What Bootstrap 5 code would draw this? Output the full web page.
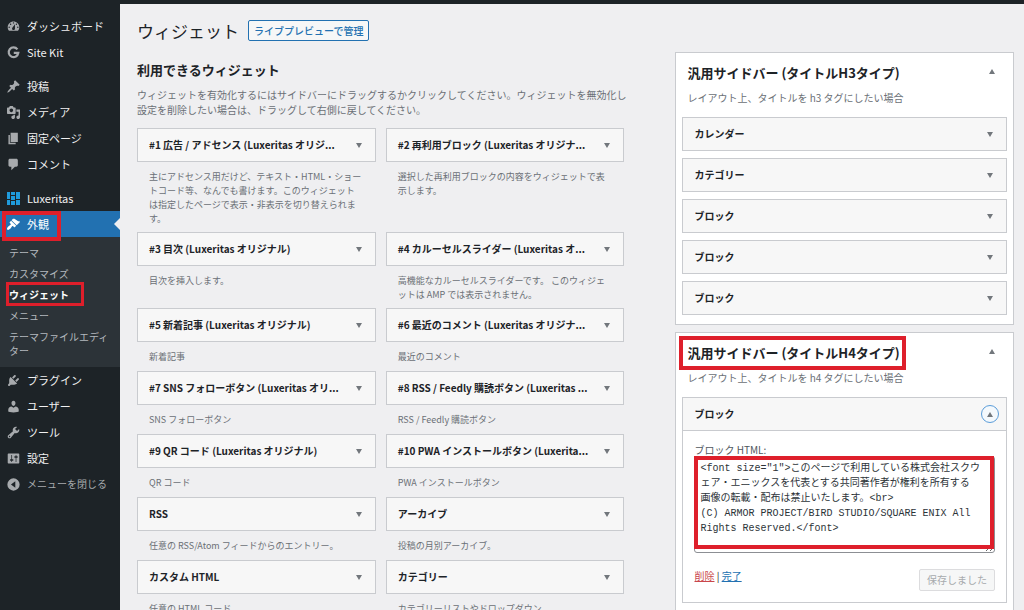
<!DOCTYPE html>
<html lang="ja">
<head>
<meta charset="utf-8">
<meta name="viewport" content="width=device-width, initial-scale=1">
<title>ウィジェット</title>
<link href="https://cdn.jsdelivr.net/npm/bootstrap@5.3.0/dist/css/bootstrap.min.css" rel="stylesheet">
<style>
  :root { --ink: #1d2327; --line: #c9cbcf; --muted: #6b7076; --red: #de1f2b; }
  body { font-family: "Noto Sans CJK JP", "Noto Sans", sans-serif; font-size: 10px; line-height: 14px; color: var(--ink); background: #efeff1; }
  .topbar { height: 4px; background: var(--ink); }
  .shell { height: calc(100vh - 4px); }

  /* admin menu */
  .admin-menu { width: 120px; background: var(--ink); padding-top: 9px; }
  .admin-menu .menu-link { height: 26px; padding-left: 7px; gap: 7px; color: #f0f0f1; font-size: 11px; text-decoration: none; white-space: nowrap; }
  .admin-menu .menu-link svg { width: 13px; height: 13px; fill: #a7aaad; flex: none; }
  .admin-menu .menu-gap { margin-top: 8px; }
  .admin-menu .menu-current { background: #2271b1; color: #fff; }
  .admin-menu .menu-current svg { fill: #fff; }
  .menu-current::after { content: ""; position: absolute; right: 0; top: 7px; border: 6px solid transparent; border-right-color: #efeff1; border-left: 0; }
  .admin-menu .menu-collapse { font-size: 10px; color: #a7aaad; background: none; border: 0; }
  .submenu { background: #2c3338; padding: 5px 0 6px; }
  .submenu a { display: block; padding: 4px 8px 3px 9px; color: #b4b9be; text-decoration: none; }
  .submenu .active { color: #fff; font-weight: 700; }

  /* highlight frames */
  .frame { position: absolute; border: 4px solid var(--red); pointer-events: none; z-index: 2; }
  .frame-menu { left: 2px; top: 0; width: 59px; height: 30px; }
  .frame-sub { left: 6px; top: -2px; width: 78px; height: 24px; border-width: 3px; }
  .frame-title { inset: -8px auto auto -8px; width: 227px; height: 34px; }
  .frame-code { inset: 0 1px 4px 0; }

  /* content */
  .page-main { padding: 0 10px 0 17px; min-width: 0; }
  .page-head { height: 48px; padding-top: 16px; gap: 9px; }
  .page-head h1 { font-size: 17px; line-height: 21px; font-weight: 400; }
  .btn-preview { font-size: 10px; line-height: 19px; padding: 0 5px; color: #2271b1; border: 1px solid #2271b1; border-radius: 2px; background: #f6f7f7; font-weight: 500; }
  .columns { display: grid; grid-template-columns: minmax(0, 144fr) minmax(0, 100fr); column-gap: 51px; align-items: start; }
  .available { padding-top: 9px; }
  .available h2 { font-size: 13px; line-height: 18px; font-weight: 700; }
  .lead-text { line-height: 15px; color: var(--muted); margin: 8px 0 11px; white-space: nowrap; }
  .widget-grid { display: grid; grid-template-columns: repeat(2, minmax(0, 1fr)); column-gap: 10px; }
  .wbox { height: 34px; padding: 0 12px 0 11px; background: #f7f7f7; border: 1px solid var(--line); }
  .wbox h3, .panel-head h2 { white-space: nowrap; }
  .wbox h3 { font-size: 10px; line-height: 14px; font-weight: 700; }
  .wdesc { font-size: 9px; min-height: 15px; margin: 8px 11px 6px 12px; color: var(--muted); white-space: nowrap; }
  .toggle { border: 0; background: none; padding: 0; width: 8px; height: 14px; display: flex; align-items: center; justify-content: center; flex: none; }
  .toggle::before { content: ""; border: 3px solid transparent; border-top: 5px solid #72777c; border-bottom: 0; }
  .toggle.up::before { border-top: 0; border-bottom: 5px solid #72777c; }
  .toggle.ring { width: 18px; height: 18px; border: 1px solid #5b9dd9; border-radius: 50%; background: #f4f9fd; margin-right: -5px; }

  .panel { background: #fff; border: 1px solid var(--line); padding: 11px 6px 9px; margin-bottom: 7px; }
  .panel-head { padding: 0 11px 0 5px; }
  .panel-head h2 { font-size: 13px; line-height: 18px; font-weight: 700; }
  .panel-desc { color: var(--muted); margin: 9px 5px 12px; }
  .stack { display: grid; row-gap: 7px; }
  .wbody { border: 1px solid var(--line); border-top: 0; padding: 13px 11px 11px; }
  .wbody label { display: block; color: #50575e; line-height: 12px; }
  .code { display: block; width: 100%; height: 97px; padding: 4px 5px; border: 1px solid #8c8f94; border-radius: 3px; font-family: "Liberation Mono", "Noto Sans CJK JP", monospace; font-size: 10px; line-height: 15px; color: #2c3338; background: #fff; }
  .link-delete { color: #c9474b; }
  .link-done { color: #2271b1; }
  .btn-saved { font-size: 10px; line-height: 20px; padding: 0 7px; border: 1px solid #dcdcde; border-radius: 2px; background: #f6f7f7; color: #a7aaad; }
</style>
</head>
<body class="overflow-hidden">
<div class="topbar"></div>
<div class="shell d-flex overflow-hidden">
  <nav class="admin-menu flex-shrink-0" aria-label="メインメニュー">
    <ul class="list-unstyled m-0">
      <li><a class="menu-link d-flex align-items-center" href="#"><svg viewBox="1 1 18 18"><path d="M3.76 16h12.48c1.1-1.37 1.76-3.11 1.76-5 0-4.42-3.58-8-8-8s-8 3.58-8 8c0 1.89.66 3.63 1.76 5zM10 4c.55 0 1 .45 1 1s-.45 1-1 1-1-.45-1-1 .45-1 1-1zM6 6c.55 0 1 .45 1 1s-.45 1-1 1-1-.45-1-1 .45-1 1-1zm8 0c.55 0 1 .45 1 1s-.45 1-1 1-1-.45-1-1 .45-1 1-1zm-5.37 5.55L12 7v6c0 1.1-.9 2-2 2s-2-.9-2-2c0-.57.24-1.08.63-1.45zM4 10c.55 0 1 .45 1 1s-.45 1-1 1-1-.45-1-1 .45-1 1-1zm12 0c.55 0 1 .45 1 1s-.45 1-1 1-1-.45-1-1 .45-1 1-1z"/></svg>ダッシュボード</a></li>
      <li><a class="menu-link d-flex align-items-center" href="#"><svg viewBox="0 0 20 20"><path d="M16 5.2A7.4 7.4 0 1 0 17.4 10.6H10.4" fill="none" stroke="#a7aaad" stroke-width="3.4"/></svg>Site Kit</a></li>
      <li class="menu-gap"><a class="menu-link d-flex align-items-center" href="#"><svg viewBox="1 1 18 18"><path d="M10.44 3.02l1.82-1.82 6.36 6.35-1.83 1.82c-1.05-.68-2.48-.57-3.41.36l-.75.75c-.92.93-1.04 2.35-.35 3.41l-1.83 1.82-2.41-2.41-2.8 2.79c-.42.42-3.38 2.71-3.8 2.29s1.86-3.39 2.28-3.81l2.79-2.79L4.1 9.36l1.83-1.82c1.05.69 2.48.57 3.4-.36l.75-.75c.93-.92 1.05-2.35.36-3.41z"/></svg>投稿</a></li>
      <li><a class="menu-link d-flex align-items-center" href="#"><svg viewBox="1 1 18 18"><path d="M13 11V4c0-.55-.45-1-1-1h-1.67L9 1H5L3.67 3H2c-.55 0-1 .45-1 1v7c0 .55.45 1 1 1h10c.55 0 1-.45 1-1zM7 4.5c1.38 0 2.5 1.12 2.5 2.5S8.38 9.5 7 9.5 4.5 8.38 4.5 7 5.62 4.5 7 4.5zM14 6h5v10.5c0 1.38-1.12 2.5-2.5 2.5S14 17.88 14 16.5s1.12-2.5 2.5-2.5c.17 0 .34.02.5.05V9h-3V6zm-4 8.05V13h2v3.5c0 1.38-1.12 2.5-2.5 2.5S7 17.88 7 16.5 8.12 14 9.5 14c.17 0 .34.02.5.05z"/></svg>メディア</a></li>
      <li><a class="menu-link d-flex align-items-center" href="#"><svg viewBox="1 1 18 18"><path d="M6 15V2h10v13H6zm-1 1h8v2H3V5h2v11z"/></svg>固定ページ</a></li>
      <li><a class="menu-link d-flex align-items-center" href="#"><svg viewBox="1 1 18 18"><path d="M5 2h9c1.100 0 2 .9 2 2v7c0 1.100-.9 2-2 2h-2l-5 5v-5H5c-1.100 0-2-.9-2-2V4c0-1.100.9-2 2-2z"/></svg>コメント</a></li>
      <li class="menu-gap"><a class="menu-link d-flex align-items-center" href="#"><svg viewBox="0 0 13 13"><path fill="#1f9bdc" d="M0 0h3v7H0zM4 0h4v3H4zM9 0h4v7H9zM4 4h4v4H4zM0 8h3v5H0zM4 9h4v4H4zM9 8h4v5H9z"/></svg>Luxeritas</a></li>
      <li class="position-relative">
        <a class="menu-link menu-current d-flex align-items-center" href="#"><svg viewBox="1 1 18 18"><path d="M14.48 11.06L7.41 3.99l1.5-1.5c.5-.56 2.3-.47 3.51.32 1.21.8 1.43 1.28 2.91 2.1 1.18.64 2.45 1.26 4.45.85zm-.71.71L6.7 4.7 4.93 6.47c-.39.39-.39 1.02 0 1.41l1.06 1.06c.39.39.39 1.03 0 1.42-.6.6-1.43 1.11-2.21 1.69-.35.26-.7.53-1.01.84C1.43 14.23.4 16.08 1.4 17.07c.99 1 2.84-.03 4.18-1.36.31-.31.58-.66.85-1.02.57-.78 1.08-1.61 1.69-2.21.39-.39 1.02-.39 1.41 0l1.06 1.06c.39.39 1.02.39 1.41 0z"/></svg>外観</a>
        <span class="frame frame-menu"></span>
        <ul class="submenu list-unstyled">
          <li><a href="#">テーマ</a></li>
          <li><a href="#">カスタマイズ</a></li>
          <li class="position-relative"><a class="active" href="#" aria-current="page">ウィジェット</a><span class="frame frame-sub"></span></li>
          <li><a href="#">メニュー</a></li>
          <li><a href="#">テーマファイルエディ<br>ター</a></li>
        </ul>
      </li>
      <li><a class="menu-link d-flex align-items-center" href="#"><svg viewBox="1 1 18 18"><path d="M13.11 4.36L9.87 7.6 8 5.73l3.24-3.24c.35-.34 1.05-.2 1.56.32.52.51.66 1.21.31 1.55zm-8 1.77l.91-1.12 9.01 9.01-1.19.84c-.71.71-2.63 1.16-3.82 1.16H6.14L4.9 17.26c-.59.59-1.54.59-2.12 0-.59-.58-.59-1.53 0-2.12l1.24-1.24v-3.88c0-1.13.4-3.19 1.09-3.89zm7.26 3.97l3.24-3.24c.34-.35 1.04-.21 1.55.31.52.51.66 1.21.31 1.55l-3.24 3.25z"/></svg>プラグイン</a></li>
      <li><a class="menu-link d-flex align-items-center" href="#"><svg viewBox="1 1 18 18"><path d="M10 9.25c-2.27 0-2.73-3.44-2.73-3.44C7 4.02 7.82 2 9.97 2c2.16 0 2.98 2.02 2.71 3.81 0 0-.41 3.44-2.68 3.44zm0 2.57L12.72 10c2.39 0 4.52 2.33 4.52 4.53v2.49s-3.65 1.13-7.24 1.13c-3.65 0-7.24-1.13-7.24-1.13v-2.49c0-2.25 1.94-4.48 4.47-4.48z"/></svg>ユーザー</a></li>
      <li><a class="menu-link d-flex align-items-center" href="#"><svg viewBox="1 1 18 18"><path d="M16.68 9.77c-1.34 1.34-3.3 1.67-4.95.99l-5.41 6.52c-.99.99-2.59.99-3.58 0s-.99-2.59 0-3.57l6.52-5.42c-.68-1.65-.35-3.61.99-4.95 1.28-1.28 3.12-1.62 4.72-1.06l-2.89 2.89 2.82 2.82 2.86-2.87c.53 1.58.18 3.39-1.08 4.65zM3.81 16.21c.4.39 1.04.39 1.43 0 .4-.4.4-1.04 0-1.43-.39-.4-1.03-.4-1.43 0-.39.39-.39 1.03 0 1.43z"/></svg>ツール</a></li>
      <li><a class="menu-link d-flex align-items-center" href="#"><svg viewBox="1 1 18 18"><path d="M18 16V4c0-.55-.45-1-1-1H3c-.55 0-1 .45-1 1v12c0 .55.45 1 1 1h14c.55 0 1-.45 1-1zM8 11h1c.55 0 1 .45 1 1s-.45 1-1 1H8v1.500c0 .28-.22.5-.5.5s-.5-.22-.5-.5V13H6c-.55 0-1-.45-1-1s.45-1 1-1h1V5.500c0-.28.22-.5.5-.5s.5.22.5.5V11zm5-2h-1c-.55 0-1-.45-1-1s.45-1 1-1h1V5.500c0-.28.22-.5.5-.5s.5.22.5.5V7h1c.55 0 1 .45 1 1s-.45 1-1 1h-1v5.500c0 .28-.22.5-.5.5s-.5-.22-.5-.5V9z"/></svg>設定</a></li>
      <li><button type="button" class="menu-link menu-collapse d-flex align-items-center"><svg viewBox="1 1 18 18"><path fill-rule="evenodd" d="M10 1.500a8.500 8.500 0 1 0 0 17a8.500 8.500 0 0 0 0-17zM12.500 5.500v9L6.500 10z"/></svg>メニューを閉じる</button></li>
    </ul>
  </nav>

  <main class="page-main flex-grow-1">
    <header class="page-head d-flex align-items-start">
      <h1 class="m-0">ウィジェット</h1>
      <button type="button" class="btn-preview">ライブプレビューで管理</button>
    </header>
    <div class="columns">
      <section class="available">
        <h2 class="m-0">利用できるウィジェット</h2>
        <p class="lead-text">ウィジェットを有効化するにはサイドバーにドラッグするかクリックしてください。ウィジェットを無効化し<br>設定を削除したい場合は、ドラッグして右側に戻してください。</p>
        <div class="widget-grid">
          <article><div class="wbox d-flex align-items-center justify-content-between"><h3 class="m-0">#1 広告 / アドセンス (Luxeritas オリジ...</h3><button type="button" class="toggle" aria-label="開く"></button></div><p class="wdesc">主にアドセンス用だけど、テキスト・HTML・ショー<br>トコード等、なんでも書けます。このウィジェット<br>は指定したページで表示・非表示を切り替えられま<br>す。</p></article>
          <article><div class="wbox d-flex align-items-center justify-content-between"><h3 class="m-0">#2 再利用ブロック (Luxeritas オリジナ...</h3><button type="button" class="toggle" aria-label="開く"></button></div><p class="wdesc">選択した再利用ブロックの内容をウィジェットで表<br>示します。</p></article>
          <article><div class="wbox d-flex align-items-center justify-content-between"><h3 class="m-0">#3 目次 (Luxeritas オリジナル)</h3><button type="button" class="toggle" aria-label="開く"></button></div><p class="wdesc">目次を挿入します。</p></article>
          <article><div class="wbox d-flex align-items-center justify-content-between"><h3 class="m-0">#4 カルーセルスライダー (Luxeritas オ...</h3><button type="button" class="toggle" aria-label="開く"></button></div><p class="wdesc">高機能なカルーセルスライダーです。 このウィジェ<br>ットは AMP では表示されません。</p></article>
          <article><div class="wbox d-flex align-items-center justify-content-between"><h3 class="m-0">#5 新着記事 (Luxeritas オリジナル)</h3><button type="button" class="toggle" aria-label="開く"></button></div><p class="wdesc">新着記事</p></article>
          <article><div class="wbox d-flex align-items-center justify-content-between"><h3 class="m-0">#6 最近のコメント (Luxeritas オリジナ...</h3><button type="button" class="toggle" aria-label="開く"></button></div><p class="wdesc">最近のコメント</p></article>
          <article><div class="wbox d-flex align-items-center justify-content-between"><h3 class="m-0">#7 SNS フォローボタン (Luxeritas オリ...</h3><button type="button" class="toggle" aria-label="開く"></button></div><p class="wdesc">SNS フォローボタン</p></article>
          <article><div class="wbox d-flex align-items-center justify-content-between"><h3 class="m-0">#8 RSS / Feedly 購読ボタン (Luxeritas ...</h3><button type="button" class="toggle" aria-label="開く"></button></div><p class="wdesc">RSS / Feedly 購読ボタン</p></article>
          <article><div class="wbox d-flex align-items-center justify-content-between"><h3 class="m-0">#9 QR コード (Luxeritas オリジナル)</h3><button type="button" class="toggle" aria-label="開く"></button></div><p class="wdesc">QR コード</p></article>
          <article><div class="wbox d-flex align-items-center justify-content-between"><h3 class="m-0">#10 PWA インストールボタン (Luxerita...</h3><button type="button" class="toggle" aria-label="開く"></button></div><p class="wdesc">PWA インストールボタン</p></article>
          <article><div class="wbox d-flex align-items-center justify-content-between"><h3 class="m-0">RSS</h3><button type="button" class="toggle" aria-label="開く"></button></div><p class="wdesc">任意の RSS/Atom フィードからのエントリー。</p></article>
          <article><div class="wbox d-flex align-items-center justify-content-between"><h3 class="m-0">アーカイブ</h3><button type="button" class="toggle" aria-label="開く"></button></div><p class="wdesc">投稿の月別アーカイブ。</p></article>
          <article><div class="wbox d-flex align-items-center justify-content-between"><h3 class="m-0">カスタム HTML</h3><button type="button" class="toggle" aria-label="開く"></button></div><p class="wdesc">任意の HTML コード。</p></article>
          <article><div class="wbox d-flex align-items-center justify-content-between"><h3 class="m-0">カテゴリー</h3><button type="button" class="toggle" aria-label="開く"></button></div><p class="wdesc">カテゴリーリストやドロップダウン。</p></article>
        </div>
      </section>

      <div>
        <section class="panel">
          <div class="panel-head d-flex align-items-start justify-content-between"><h2 class="m-0">汎用サイドバー (タイトルH3タイプ)</h2><button type="button" class="toggle up" aria-label="閉じる"></button></div>
          <p class="panel-desc">レイアウト上、タイトルを h3 タグにしたい場合</p>
          <div class="stack">
            <div class="wbox d-flex align-items-center justify-content-between"><h3 class="m-0">カレンダー</h3><button type="button" class="toggle" aria-label="開く"></button></div>
            <div class="wbox d-flex align-items-center justify-content-between"><h3 class="m-0">カテゴリー</h3><button type="button" class="toggle" aria-label="開く"></button></div>
            <div class="wbox d-flex align-items-center justify-content-between"><h3 class="m-0">ブロック</h3><button type="button" class="toggle" aria-label="開く"></button></div>
            <div class="wbox d-flex align-items-center justify-content-between"><h3 class="m-0">ブロック</h3><button type="button" class="toggle" aria-label="開く"></button></div>
            <div class="wbox d-flex align-items-center justify-content-between"><h3 class="m-0">ブロック</h3><button type="button" class="toggle" aria-label="開く"></button></div>
          </div>
        </section>

        <section class="panel">
          <div class="panel-head d-flex align-items-start justify-content-between"><div class="position-relative"><h2 class="m-0">汎用サイドバー (タイトルH4タイプ)</h2><span class="frame frame-title"></span></div><button type="button" class="toggle up" aria-label="閉じる"></button></div>
          <p class="panel-desc">レイアウト上、タイトルを h4 タグにしたい場合</p>
          <div class="wbox d-flex align-items-center justify-content-between"><h3 class="m-0">ブロック</h3><button type="button" class="toggle up ring" aria-label="閉じる"></button></div>
          <form class="wbody">
            <label for="block-html">ブロック HTML:</label>
            <div class="position-relative">
              <textarea id="block-html" class="code" spellcheck="false">&lt;font size="1"&gt;このページで利用している株式会社スクウ
ェア・エニックスを代表とする共同著作者が権利を所有する
画像の転載・配布は禁止いたします。&lt;br&gt;
(C) ARMOR PROJECT/BIRD STUDIO/SQUARE ENIX All
Rights Reserved.&lt;/font&gt;</textarea>
              <span class="frame frame-code"></span>
            </div>
            <div class="d-flex justify-content-between align-items-start mt-3">
              <div><a class="link-delete" href="#">削除</a> | <a class="link-done" href="#">完了</a></div>
              <button type="button" class="btn-saved" disabled>保存しました</button>
            </div>
          </form>
        </section>
      </div>
    </div>
  </main>
</div>
<script src="https://cdn.jsdelivr.net/npm/bootstrap@5.3.0/dist/js/bootstrap.bundle.min.js"></script>
</body>
</html>
